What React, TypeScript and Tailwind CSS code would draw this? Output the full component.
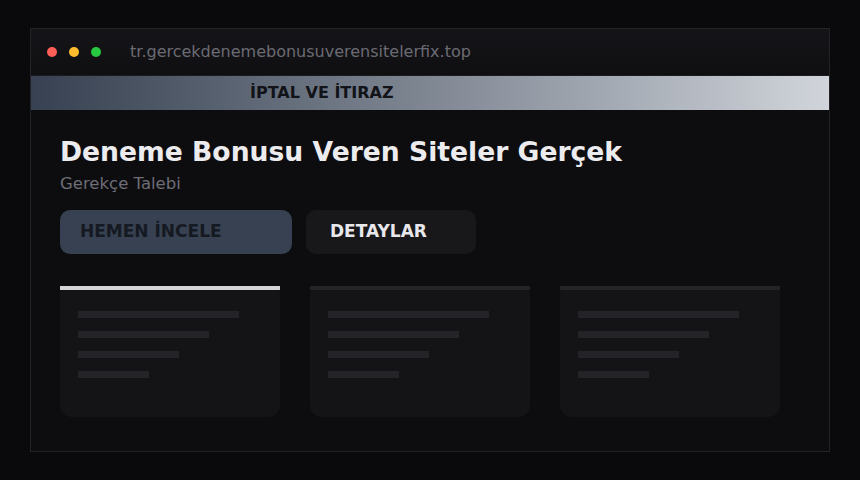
import React from 'react';

const cards = [
  { active: true },
  { active: false },
  { active: false },
];

const lineWidths = ['w-[161px]', 'w-[131px]', 'w-[101px]', 'w-[71px]'];

function SkeletonCard({ active }: { active: boolean }) {
  return (
    <div className="flex w-[220px] flex-col">
      <div className={`h-1 ${active ? 'bg-[#d4d4d8]' : 'bg-[#242428]'}`} />
      <div className="flex h-[127px] flex-col gap-[13px] rounded-b-xl rounded-t-[3px] bg-[#141417] px-[18px] pt-[21px]">
        {lineWidths.map((w) => (
          <div key={w} className={`h-[7px] bg-[#242428] ${w}`} />
        ))}
      </div>
    </div>
  );
}

export default function App() {
  return (
    <div
      className="h-[480px] w-[860px] bg-[#0a0a0c] pl-[30px] pt-[28px]"
      style={{ fontFamily: '"DejaVu Sans", Verdana, sans-serif' }}
    >
      <div className="flex h-[424px] w-[800px] flex-col border border-[#232327] bg-[#0d0d10]">
        {/* title bar */}
        <div className="flex h-[46px] items-center bg-gradient-to-b from-[#151519] to-[#0f0f12] pl-[16px]">
          <div className="flex gap-3">
            <span className="h-[10px] w-[10px] rounded-full bg-[#ff5f57]" />
            <span className="h-[10px] w-[10px] rounded-full bg-[#febc2e]" />
            <span className="h-[10px] w-[10px] rounded-full bg-[#28c840]" />
          </div>
          <span className="ml-[29px] text-[16px] text-[#6b6b73]">tr.gercekdenemebonusuverensitelerfix.top</span>
        </div>

        {/* nav strip */}
        <div className="flex h-[35px] items-center border-t border-[#1c1c20] bg-gradient-to-r from-[#374151] to-[#d1d5db] pl-[219px]">
          <span className="text-[16px] font-bold text-[#111318]">İPTAL VE İTIRAZ</span>
        </div>

        {/* content */}
        <div className="flex flex-col px-[29px] pt-[24px]">
          <h1 className="text-[26.6px] font-bold leading-[36px] text-[#ececef]">Deneme Bonusu Veren Siteler Gerçek</h1>
          <p className="mt-[4px] text-[16.5px] leading-[20px] text-[#6e6e76]">Gerekçe Talebi</p>

          <div className="mt-[16px] flex gap-[14px]">
            <button className="flex h-[44px] w-[232px] items-center rounded-[10px] bg-[#374151] pl-[20px] text-[17px] font-bold text-[#151922]">
              HEMEN İNCELE
            </button>
            <button className="flex h-[44px] w-[170px] items-center rounded-[10px] bg-[#18181b] pl-[24px] text-[17px] font-bold text-[#e8e8ec]">
              DETAYLAR
            </button>
          </div>

          <div className="mt-[32px] flex gap-[30px]">
            {cards.map((c, i) => (
              <SkeletonCard key={i} active={c.active} />
            ))}
          </div>
        </div>
      </div>
    </div>
  );
}
